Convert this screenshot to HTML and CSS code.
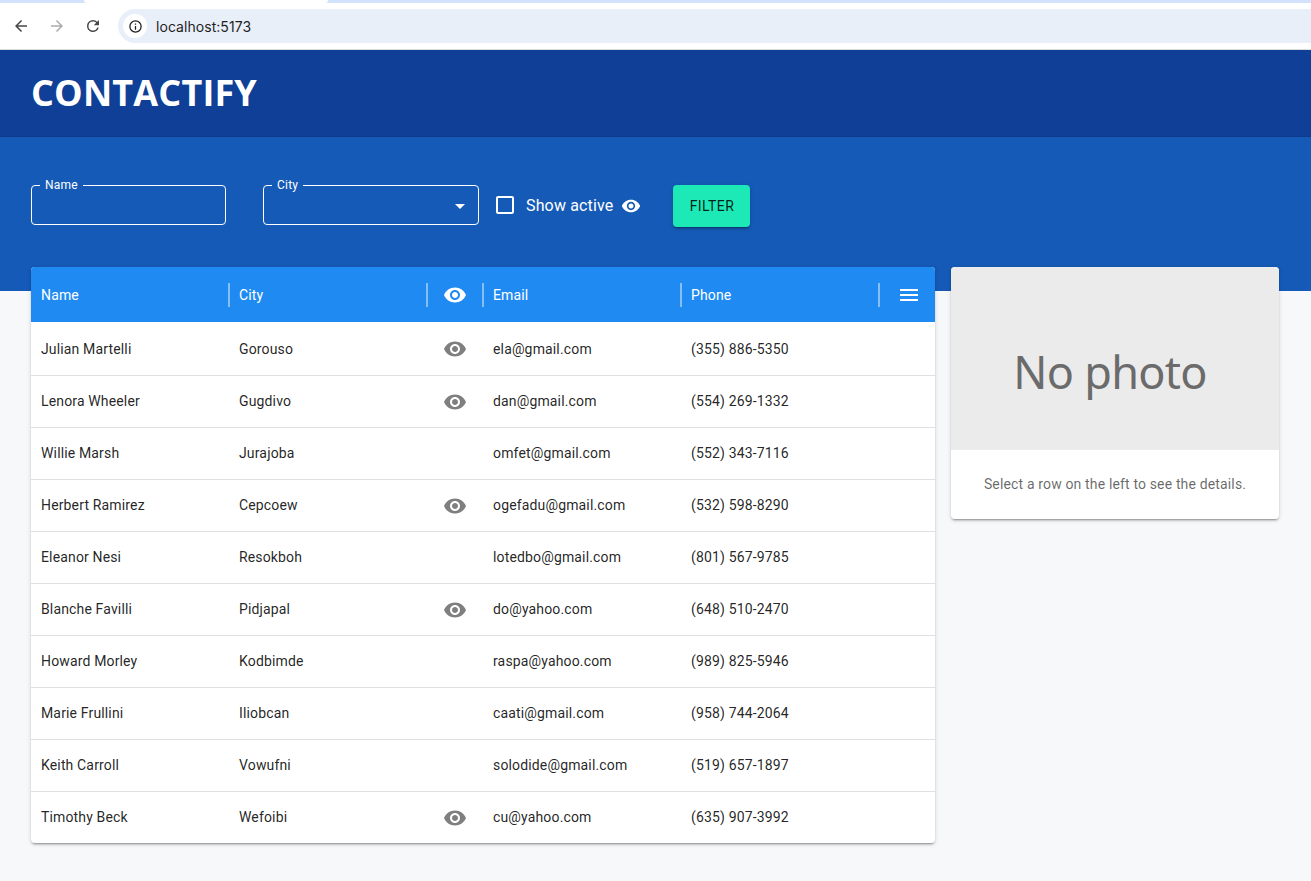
FILE: index.html
```html
<!DOCTYPE html>
<html lang="en">
<head>
    <meta charset="UTF-8">
    <meta name="viewport" content="width=device-width, initial-scale=1.0">
    <title>Contactify</title>
    <link rel="stylesheet" href="styles.css">
</head>
<body>
    <svg class="icon-defs" aria-hidden="true">
        <symbol id="eye" viewBox="0 0 24 24"><path d="M12 4.5C7 4.5 2.73 7.61 1 12c1.73 4.39 6 7.5 11 7.5s9.27-3.11 11-7.5c-1.73-4.39-6-7.5-11-7.5zM12 17c-2.76 0-5-2.24-5-5s2.24-5 5-5 5 2.24 5 5-2.24 5-5 5zm0-8c-1.66 0-3 1.34-3 3s1.34 3 3 3 3-1.34 3-3-1.34-3-3-3z"/></symbol>
    </svg>

    <!-- browser toolbar -->
    <div class="tabstrip"><div class="tab"></div></div>
    <div class="toolbar">
        <svg class="nav-icon" viewBox="0 0 24 24"><path d="M20 11H7.83l5.59-5.59L12 4l-8 8 8 8 1.41-1.41L7.83 13H20v-2z"/></svg>
        <svg class="nav-icon nav-icon-off" viewBox="0 0 24 24"><path d="M12 4l-1.41 1.41L16.17 11H4v2h12.17l-5.58 5.59L12 20l8-8z"/></svg>
        <svg class="nav-icon" viewBox="0 0 24 24"><path d="M17.65 6.35A7.95 7.95 0 0 0 12 4a8 8 0 1 0 7.73 10h-2.08A6 6 0 1 1 12 6c1.66 0 3.14.69 4.22 1.78L13 11h7V4l-2.35 2.35z"/></svg>
        <div class="omnibox">
            <span class="site-info">
                <svg viewBox="0 0 24 24"><path d="M11 7h2v2h-2zm0 4h2v6h-2zm1-9a10 10 0 1 0 0 20 10 10 0 0 0 0-20zm0 18a8 8 0 1 1 0-16 8 8 0 0 1 0 16z"/></svg>
            </span>
            <span class="url">localhost:5173</span>
        </div>
    </div>

    <header class="app-header">
        <h1>CONTACTIFY</h1>
    </header>

    <section class="filter-band">
        <form class="filters">
            <fieldset class="field field-name">
                <legend>Name</legend>
            </fieldset>
            <fieldset class="field field-city">
                <legend>City</legend>
                <svg class="select-arrow" viewBox="0 0 24 24"><path d="M7 10l5 5 5-5z"/></svg>
            </fieldset>
            <label class="show-active">
                <svg class="checkbox" viewBox="0 0 24 24"><path d="M19 5v14H5V5h14m0-2H5c-1.1 0-2 .9-2 2v14c0 1.1.9 2 2 2h14c1.1 0 2-.9 2-2V5c0-1.1-.9-2-2-2z"/></svg>
                <span>Show active</span>
                <svg class="eye-small"><use href="#eye"/></svg>
            </label>
            <button type="button" class="filter-btn">FILTER</button>
        </form>
    </section>

    <main class="content">
        <div class="grid">
            <div class="row head">
                <div class="cell">Name</div>
                <div class="cell">City</div>
                <div class="cell cell-icon"><svg class="eye"><use href="#eye"/></svg></div>
                <div class="cell">Email</div>
                <div class="cell">Phone</div>
                <div class="cell cell-icon">
                    <svg class="menu" viewBox="0 0 24 24"><path d="M3 18h18v-2H3v2zm0-5h18v-2H3v2zm0-7v2h18V6H3z"/></svg>
                </div>
            </div>
            <div class="row first">
                <div class="cell">Julian Martelli</div><div class="cell">Gorouso</div>
                <div class="cell cell-icon"><svg class="eye"><use href="#eye"/></svg></div>
                <div class="cell">ela@gmail.com</div><div class="cell">(355) 886-5350</div><div class="cell"></div>
            </div>
            <div class="row">
                <div class="cell">Lenora Wheeler</div><div class="cell">Gugdivo</div>
                <div class="cell cell-icon"><svg class="eye"><use href="#eye"/></svg></div>
                <div class="cell">dan@gmail.com</div><div class="cell">(554) 269-1332</div><div class="cell"></div>
            </div>
            <div class="row">
                <div class="cell">Willie Marsh</div><div class="cell">Jurajoba</div>
                <div class="cell"></div>
                <div class="cell">omfet@gmail.com</div><div class="cell">(552) 343-7116</div><div class="cell"></div>
            </div>
            <div class="row">
                <div class="cell">Herbert Ramirez</div><div class="cell">Cepcoew</div>
                <div class="cell cell-icon"><svg class="eye"><use href="#eye"/></svg></div>
                <div class="cell">ogefadu@gmail.com</div><div class="cell">(532) 598-8290</div><div class="cell"></div>
            </div>
            <div class="row">
                <div class="cell">Eleanor Nesi</div><div class="cell">Resokboh</div>
                <div class="cell"></div>
                <div class="cell">lotedbo@gmail.com</div><div class="cell">(801) 567-9785</div><div class="cell"></div>
            </div>
            <div class="row">
                <div class="cell">Blanche Favilli</div><div class="cell">Pidjapal</div>
                <div class="cell cell-icon"><svg class="eye"><use href="#eye"/></svg></div>
                <div class="cell">do@yahoo.com</div><div class="cell">(648) 510-2470</div><div class="cell"></div>
            </div>
            <div class="row">
                <div class="cell">Howard Morley</div><div class="cell">Kodbimde</div>
                <div class="cell"></div>
                <div class="cell">raspa@yahoo.com</div><div class="cell">(989) 825-5946</div><div class="cell"></div>
            </div>
            <div class="row">
                <div class="cell">Marie Frullini</div><div class="cell">Iliobcan</div>
                <div class="cell"></div>
                <div class="cell">caati@gmail.com</div><div class="cell">(958) 744-2064</div><div class="cell"></div>
            </div>
            <div class="row">
                <div class="cell">Keith Carroll</div><div class="cell">Vowufni</div>
                <div class="cell"></div>
                <div class="cell">solodide@gmail.com</div><div class="cell">(519) 657-1897</div><div class="cell"></div>
            </div>
            <div class="row last">
                <div class="cell">Timothy Beck</div><div class="cell">Wefoibi</div>
                <div class="cell cell-icon"><svg class="eye"><use href="#eye"/></svg></div>
                <div class="cell">cu@yahoo.com</div><div class="cell">(635) 907-3992</div><div class="cell"></div>
            </div>
        </div>

        <aside class="details">
            <div class="photo">No photo</div>
            <p class="hint">Select a row on the left to see the details.</p>
        </aside>
    </main>
</body>
</html>
```

FILE: styles.css
```css
* {
    box-sizing: border-box;
}
body {
    margin: 0;
    font-family: Roboto, sans-serif;
    background-color: #f7f8fa;
    color: rgba(0, 0, 0, 0.87);
    overflow: hidden;
}
.icon-defs {
    display: none;
}

/* browser toolbar */
.tabstrip {
    height: 3px;
    background-color: #d3e3fd;
    padding-left: 84px;
}
.tab {
    width: 244px;
    height: 3px;
    background-color: #fff;
    border-radius: 0 0 6px 6px;
}
.toolbar {
    display: flex;
    align-items: center;
    height: 47px;
    padding-left: 12px;
    background-color: #fff;
    border-bottom: 1px solid #dadce0;
}
.nav-icon {
    width: 18px;
    height: 18px;
    margin-right: 18px;
    fill: #474747;
    flex: none;
}
.nav-icon-off {
    fill: #acacac;
}
.omnibox {
    display: flex;
    align-items: center;
    flex: 1;
    height: 34px;
    margin-left: -2px;
    padding-left: 5px;
    background-color: #e9eff9;
    border-radius: 17px 0 0 17px;
}
.site-info {
    display: flex;
    align-items: center;
    justify-content: center;
    width: 24px;
    height: 24px;
    border-radius: 50%;
    background-color: #fff;
}
.site-info svg {
    width: 15px;
    height: 15px;
    fill: #1f1f1f;
}
.url {
    margin-left: 9px;
    font-family: Inter, sans-serif;
    font-size: 14px;
    letter-spacing: 0.05px;
    color: #1f1f1f;
}

/* app header */
.app-header {
    height: 87px;
    padding: 0 31px 2px;
    display: flex;
    align-items: center;
    background-color: #0f3f96;
    border-bottom: 1px solid #0d3a8c;
}
.app-header h1 {
    margin: 0;
    font-family: "Open Sans", sans-serif;
    font-size: 36px;
    font-weight: 700;
    letter-spacing: 0.15px;
    color: #fff;
}

/* filters */
.filter-band {
    height: 154px;
    padding: 42px 31px 0;
    background-color: #155ab6;
}
.filters {
    display: flex;
    align-items: flex-start;
}
.field {
    position: relative;
    height: 46px;
    margin: 0;
    padding: 0;
    border: 1px solid #fff;
    border-radius: 4px;
}
.field legend {
    margin-left: 8px;
    padding: 0 5px;
    font-size: 12px;
    line-height: 12px;
    letter-spacing: 0.2px;
    color: #fff;
}
.field-name {
    width: 195px;
    margin-right: 37px;
}
.field-city {
    width: 216px;
    margin-right: 14px;
}
.select-arrow {
    position: absolute;
    right: 6px;
    top: 3px;
    width: 24px;
    height: 24px;
    fill: #fff;
}
.show-active {
    display: flex;
    align-items: center;
    height: 24px;
    margin-top: 14px;
    font-size: 16px;
    letter-spacing: 0.15px;
    color: #fff;
}
.checkbox {
    width: 24px;
    height: 24px;
    margin-right: 9px;
    fill: #fff;
}
.eye-small {
    width: 20px;
    height: 20px;
    margin-left: 8px;
    margin-top: 1px;
    fill: #fff;
}
.filter-btn {
    width: 77px;
    height: 42px;
    margin-top: 6px;
    margin-left: 32px;
    padding: 0;
    border: none;
    border-radius: 4px;
    background-color: #1de9b6;
    color: rgba(0, 0, 0, 0.87);
    font-family: Roboto, sans-serif;
    font-size: 14px;
    letter-spacing: 0.4px;
    box-shadow: 0 3px 1px -2px rgba(0, 0, 0, 0.2), 0 2px 2px rgba(0, 0, 0, 0.14), 0 1px 5px rgba(0, 0, 0, 0.12);
}

/* contacts grid */
.content {
    display: flex;
    align-items: flex-start;
    gap: 16px;
    margin-top: -24px;
    padding: 0 32px 38px 31px;
}
.grid {
    width: 904px;
    background-color: #fff;
    border-radius: 4px;
    overflow: hidden;
    box-shadow: 0 3px 1px -2px rgba(0, 0, 0, 0.2), 0 2px 2px rgba(0, 0, 0, 0.14), 0 1px 5px rgba(0, 0, 0, 0.12);
}
.row {
    display: grid;
    grid-template-columns: 198px 198px 56px 198px 198px 56px;
    height: 52px;
    border-bottom: 1px solid #e0e0e0;
    font-size: 14px;
    letter-spacing: 0.15px;
}
.row.first {
    height: 54px;
}
.row.last {
    height: 51px;
    border-bottom: none;
}
.row.head {
    height: 55px;
    border-bottom: none;
    background-color: #1f8bf2;
    color: #fff;
}
.cell {
    position: relative;
    display: flex;
    align-items: center;
    padding: 0 10px 2px;
    white-space: nowrap;
}
.first .cell,
.head .cell {
    padding-bottom: 0;
}
.cell-icon {
    justify-content: center;
    padding: 0;
}
.head .cell:not(:last-child)::after {
    content: "";
    position: absolute;
    right: -1px;
    top: 16px;
    width: 2px;
    height: 24px;
    background-color: rgba(255, 255, 255, 0.45);
}
.eye {
    width: 24px;
    height: 24px;
    fill: #7f7f7f;
}
.head .eye {
    fill: #fff;
}
.menu {
    width: 24px;
    height: 24px;
    margin-left: 4px;
    fill: #fff;
}

/* details card */
.details {
    width: 328px;
    background-color: #fff;
    border-radius: 4px;
    overflow: hidden;
    box-shadow: 0 3px 1px -2px rgba(0, 0, 0, 0.2), 0 2px 2px rgba(0, 0, 0, 0.14), 0 1px 5px rgba(0, 0, 0, 0.12);
}
.photo {
    display: flex;
    align-items: center;
    justify-content: center;
    height: 183px;
    padding: 26px 10px 0 0;
    background-color: #ebebeb;
    font-family: "Noto Sans", sans-serif;
    font-size: 45px;
    letter-spacing: -0.7px;
    color: #6b6b6b;
}
.hint {
    margin: 0;
    height: 69px;
    padding-bottom: 2px;
    display: flex;
    align-items: center;
    justify-content: center;
    font-size: 14px;
    letter-spacing: 0.15px;
    color: rgba(0, 0, 0, 0.6);
}
```
